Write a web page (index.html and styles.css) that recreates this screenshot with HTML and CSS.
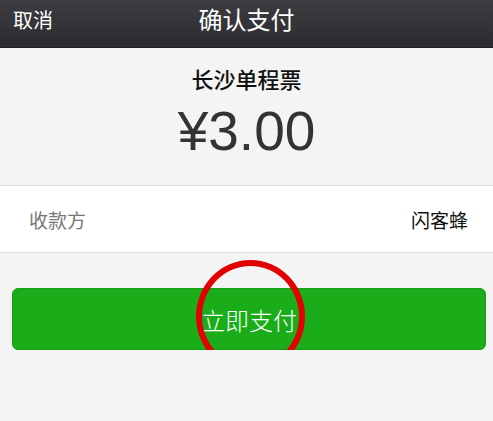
FILE: index.html
```html
<!DOCTYPE html>
<html>
<head>
<meta name="viewport" content="width=device-width, initial-scale=1.0">
<title>确认支付</title>
<link rel="stylesheet" href="styles.css">
</head>
<body>

<div class="topbar">
    <span class="cancel">取消</span>
    <span class="title">确认支付</span>
</div>

<div class="summary">
    <div class="product">长沙单程票</div>
    <div class="amount">¥3.00</div>
</div>

<div class="row">
    <span class="label">收款方</span>
    <span class="value">闪客蜂</span>
</div>

<div class="actions">
    <button class="pay">立即支付</button>
    <div class="mark"></div>
</div>

</body>
</html>
```

FILE: styles.css
```css
body {
    margin: 0;
    background-color: #f4f4f4;
    font-family: "Liberation Sans", "Noto Sans CJK SC", sans-serif;
}
.topbar {
    height: 48px;
    position: relative;
    display: flex;
    align-items: center;
    justify-content: center;
    background: linear-gradient(#3d3d41, #2c2c30);
    border-bottom: 1px solid #222;
    box-sizing: border-box;
    color: #fff;
}
.cancel {
    position: absolute;
    left: 13px;
    top: 7px;
    font-size: 20px;
    line-height: 28px;
}
.title {
    font-size: 24px;
    line-height: 30px;
    margin-top: -6px;
}
.summary {
    text-align: center;
    padding-top: 18px;
    height: 119px;
    border-bottom: 1px solid #ddd;
}
.product {
    font-size: 22px;
    line-height: 30px;
    color: #111;
    font-weight: 500;
}
.amount {
    font-size: 55px;
    line-height: 60px;
    margin-top: 5px;
    color: #333;
}
.row {
    display: flex;
    justify-content: space-between;
    align-items: center;
    height: 66px;
    padding: 0 25px 0 29px;
    background-color: #fff;
    border-bottom: 1px solid #ddd;
    font-size: 19px;
}
.label {
    color: #777;
}
.value {
    color: #111;
}
.actions {
    position: relative;
    padding: 35px 7px 0 12px;
}
.pay {
    display: block;
    width: 100%;
    height: 62px;
    border: 1px solid #169e15;
    border-radius: 6px;
    background-color: #1aad19;
    color: #fff;
    font-size: 24px;
    font-family: "Noto Sans CJK SC", sans-serif;
    font-weight: 300;
}
.mark {
    position: absolute;
    left: 196px;
    top: 7px;
    width: 97px;
    height: 101px;
    border: 6px solid #e30000;
    border-radius: 50%;
}
```
